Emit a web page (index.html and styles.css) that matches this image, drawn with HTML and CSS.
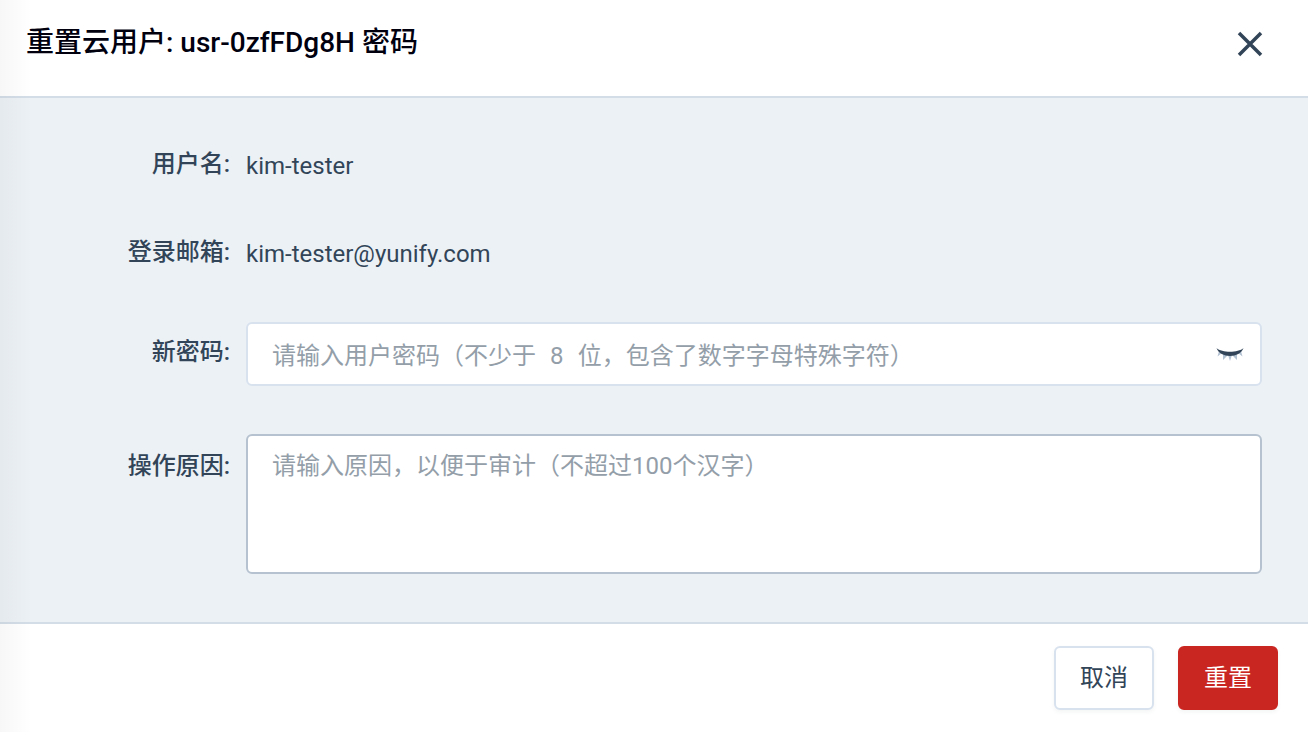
FILE: index.html
```html
<!DOCTYPE html>
<html lang="zh-CN">
<head>
<meta charset="utf-8">
<meta name="viewport" content="width=device-width, initial-scale=1">
<title>重置密码</title>
<link rel="stylesheet" href="styles.css">
</head>
<body>
<form class="dialog">
  <header class="dialog-header">
    <h1 class="dialog-title">重置云用户: usr-0zfFDg8H 密码</h1>
    <button class="close" type="button" aria-label="关闭">
      <svg width="28" height="28" viewBox="0 0 28 28" fill="none" stroke="currentColor" stroke-width="3.500"><path d="M3 3 25 25M25 3 3 25"/></svg>
    </button>
  </header>
  <main class="dialog-body">
    <div class="row">
      <span class="label">用户名:</span>
      <span class="value">kim-tester</span>
    </div>
    <div class="row">
      <span class="label">登录邮箱:</span>
      <span class="value">kim-tester@yunify.com</span>
    </div>
    <div class="row">
      <label class="label label-input" for="password">新密码:</label>
      <div class="password">
        <input class="password-input" id="password" type="password" placeholder="请输入用户密码（不少于&emsp13; 8 &emsp13;位，包含了数字字母特殊字符）">
        <button class="eye" type="button" aria-label="显示密码">
          <svg width="28" height="14" viewBox="0 0 28 14">
            <path d="M3 4 1.500 9.500 6 6ZM7 7 7 13 12 8ZM12 8 14 14 16 8ZM16 8 21 13 21 7ZM22 6 26.500 9.500 25 4Z" fill="#b3c2d3"/>
            <path d="M.5 1C6 6 22 6 27.500 1 24 11.500 4 11.500.5 1Z" fill="#324558"/>
          </svg>
        </button>
      </div>
    </div>
    <div class="row">
      <label class="label label-textarea" for="reason">操作原因:</label>
      <textarea class="reason" id="reason" placeholder="请输入原因，以便于审计（不超过100个汉字）"></textarea>
    </div>
  </main>
  <footer class="dialog-footer">
    <button class="button" type="button">取消</button>
    <button class="button button-danger" type="submit">重置</button>
  </footer>
</form>
</body>
</html>
```
FILE: styles.css
```css
* { box-sizing: border-box; }
body {
  margin: 0;
  background: #fff;
  color: #324558;
  font: 24px/36px Roboto, "Noto Sans CJK SC", sans-serif;
}
button, input, textarea { font: inherit; color: inherit; margin: 0; }
.dialog {
  position: relative;
  display: flex;
  flex-direction: column;
  min-height: 100vh;
}
/* soft shade along the left edge of the drawer */
.dialog::before {
  content: "";
  position: absolute;
  inset: 0 auto 0 0;
  width: 32px;
  background: linear-gradient(to right, rgba(0, 0, 0, 0.03), transparent);
  pointer-events: none;
}
.dialog-header {
  display: flex;
  justify-content: space-between;
  align-items: flex-start;
  padding: 24px 44px 32px 26px;
  border-bottom: 2px solid #d3dde7;
}
.dialog-title {
  margin: 0;
  color: #00000f;
  font-size: 28px;
  line-height: 38px;
  font-weight: 500;
}
.close {
  display: flex;
  padding: 6px 0;
  border: 0;
  background: none;
}
.dialog-body {
  flex: 1;
  display: flex;
  flex-direction: column;
  gap: 48px;
  padding: 48px 46px 48px 30px;
  background: #ecf1f6;
}
.row {
  display: flex;
  align-items: flex-start;
  gap: 16px;
}
.label {
  flex: none;
  width: 200px;
  text-align: right;
  font-weight: 500;
}
.label-input { padding-top: 12px; }
.label-textarea { padding-top: 14px; }
.value { line-height: 40px; }
.password {
  flex: 1;
  display: flex;
  align-items: center;
  height: 64px;
  padding: 0 16px 0 24px;
  background: #fff;
  border: 2px solid #d8e2ee;
  border-radius: 6px;
}
.password-input {
  flex: 1;
  min-width: 0;
  padding: 4px 0 0;
  border: 0;
  outline: 0;
  background: none;
}
.eye {
  display: flex;
  padding: 0;
  border: 0;
  background: none;
}
.reason {
  flex: 1;
  height: 140px;
  padding: 12px 24px;
  background: #fff;
  border: 2px solid #b6c2cf;
  border-radius: 6px;
  resize: none;
  outline: 0;
}
::placeholder { color: #939ea9; opacity: 1; }
.dialog-footer {
  display: flex;
  justify-content: flex-end;
  gap: 24px;
  padding: 22px 30px;
  border-top: 2px solid #d3dde7;
}
.button {
  height: 64px;
  padding: 0 24px;
  border: 2px solid #d8e2ee;
  border-radius: 6px;
  background: #fff;
  box-shadow: 0 2px 4px rgba(50, 69, 88, 0.06);
}
.button-danger {
  border-color: #ca2621;
  background: #ca2621;
  color: #fff;
}
```
